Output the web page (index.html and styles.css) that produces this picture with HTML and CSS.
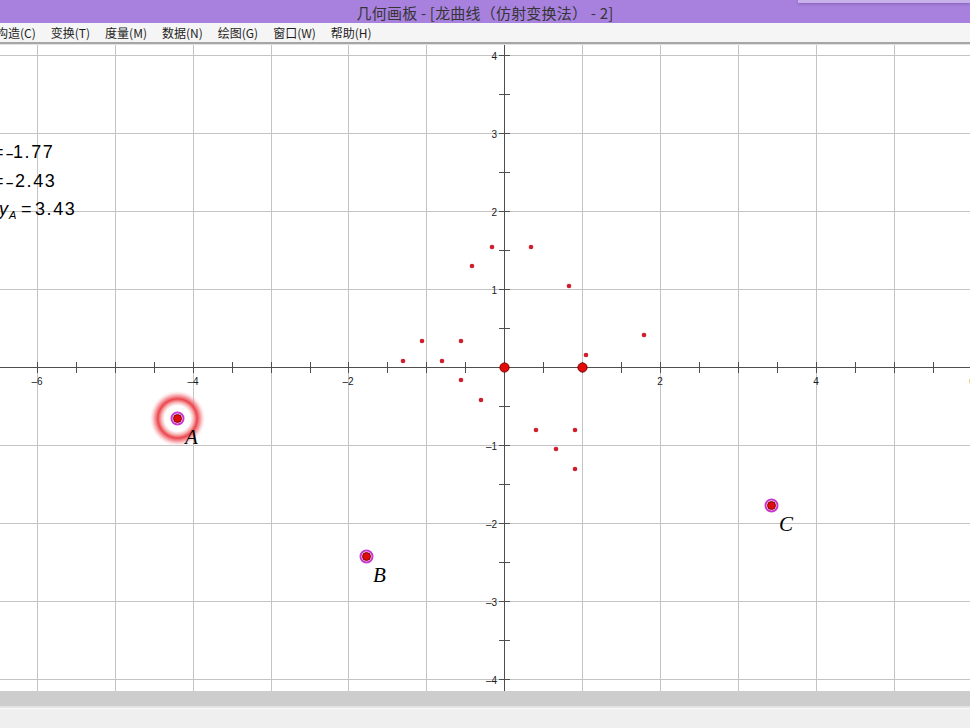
FILE: index.html
```html
<!DOCTYPE html>
<html lang="zh-CN">
<head>
<meta charset="utf-8">
<title>几何画板</title>
<link rel="stylesheet" href="styles.css">
</head>
<body>
<div class="window">
  <div class="titlebar">
    <span class="title">几何画板 - [龙曲线（仿射变换法） - 2]</span>
    <div class="other-window"></div>
  </div>
  <div class="menubar">
    <span class="menu-item">构造(C)</span>
    <span class="menu-item">变换(T)</span>
    <span class="menu-item">度量(M)</span>
    <span class="menu-item">数据(N)</span>
    <span class="menu-item">绘图(G)</span>
    <span class="menu-item">窗口(W)</span>
    <span class="menu-item">帮助(H)</span>
  </div>
  <div class="canvas">
    <svg class="sketch" width="970" height="646" viewBox="0 45 970 646" xmlns="http://www.w3.org/2000/svg">
      <defs>
        <radialGradient id="glow" cx="0.5" cy="0.5" r="0.5">
          <stop offset="0" stop-color="#ffffff" stop-opacity="1"/>
          <stop offset="0.46" stop-color="#ffffff" stop-opacity="1"/>
          <stop offset="0.58" stop-color="#f7b4b4" stop-opacity="1"/>
          <stop offset="0.7" stop-color="#ea3a40" stop-opacity="0.95"/>
          <stop offset="0.82" stop-color="#f0707a" stop-opacity="0.65"/>
          <stop offset="1" stop-color="#ffd8d8" stop-opacity="0"/>
        </radialGradient>
      </defs>
      <path class="grid" d="M37.5 45V691M115.5 45V691M193.5 45V691M271.5 45V691M348.5 45V691M426.5 45V691M582.5 45V691M660.5 45V691M738.5 45V691M816.5 45V691M894.5 45V691M0 55.5H970M0 133.5H970M0 211.5H970M0 289.5H970M0 445.5H970M0 523.5H970M0 601.5H970M0 679.5H970"/>
      <path class="axis" d="M0 367.5H970M504.5 45V691"/>
      <path class="axis" d="M37.5 362V373M76.5 362V373M115.5 362V373M154.5 362V373M193.5 362V373M232.5 362V373M271.5 362V373M310.5 362V373M348.5 362V373M387.5 362V373M426.5 362V373M465.5 362V373M543.5 362V373M582.5 362V373M621.5 362V373M660.5 362V373M699.5 362V373M738.5 362V373M777.5 362V373M816.5 362V373M855.5 362V373M894.5 362V373M933.5 362V373M499 55.5H510M499 94.5H510M499 133.5H510M499 172.5H510M499 211.5H510M499 250.5H510M499 289.5H510M499 328.5H510M499 406.5H510M499 445.5H510M499 484.5H510M499 523.5H510M499 562.5H510M499 601.5H510M499 640.5H510M499 679.5H510"/>

      <g class="xlabels">
        <text x="37" y="385">–6</text>
        <text x="193" y="385">–4</text>
        <text x="348" y="385">–2</text>
        <text x="660" y="385">2</text>
        <text x="816" y="385">4</text>
        <text x="972" y="385">6</text>
      </g>
      <g class="ylabels">
        <text x="497" y="60">4</text>
        <text x="497" y="138">3</text>
        <text x="497" y="216">2</text>
        <text x="497" y="294">1</text>
        <text x="497" y="450">–1</text>
        <text x="497" y="528">–2</text>
        <text x="497" y="606">–3</text>
        <text x="497" y="684">–4</text>
      </g>

      <g class="measure">
        <text x="-7" y="158">=</text><text class="minus" x="6" y="158">–</text><text class="num" x="13" y="158">1.77</text>
        <text x="-7" y="187">=</text><text class="minus" x="6" y="187">–</text><text class="num" x="15" y="187">2.43</text>
        <text class="var" x="-1" y="215">y</text><text class="sub" x="9" y="219">A</text><text x="21" y="215">=</text><text class="num" x="35" y="215">3.43</text>
      </g>

      <g class="dots">
        <circle cx="492" cy="247" r="2.3"/>
        <circle cx="531" cy="247" r="2.3"/>
        <circle cx="472" cy="266" r="2.3"/>
        <circle cx="569" cy="286" r="2.3"/>
        <circle cx="644" cy="335" r="2.3"/>
        <circle cx="422" cy="341" r="2.3"/>
        <circle cx="461" cy="341" r="2.3"/>
        <circle cx="403" cy="361" r="2.3"/>
        <circle cx="442" cy="361" r="2.3"/>
        <circle cx="586" cy="355" r="2.3"/>
        <circle cx="461" cy="380" r="2.3"/>
        <circle cx="481" cy="400" r="2.3"/>
        <circle cx="536" cy="430" r="2.3"/>
        <circle cx="575" cy="430" r="2.3"/>
        <circle cx="556" cy="449" r="2.3"/>
        <circle cx="575" cy="469" r="2.3"/>
      </g>
      <g class="big">
        <circle cx="504.5" cy="367.5" r="4.6"/>
        <circle cx="582.5" cy="367.5" r="4.6"/>
      </g>

      <circle cx="177.5" cy="418.5" r="28" fill="url(#glow)"/>
      <g class="point">
        <circle class="ring" cx="177.5" cy="418.5" r="6"/>
        <circle class="core" cx="177.5" cy="418.5" r="4"/>
        <circle class="ring" cx="366.5" cy="556.5" r="6"/>
        <circle class="core" cx="366.5" cy="556.5" r="4"/>
        <circle class="ring" cx="771.5" cy="505.5" r="6"/>
        <circle class="core" cx="771.5" cy="505.5" r="4"/>
      </g>
      <g class="names">
        <text x="185" y="444">A</text>
        <text x="373" y="582">B</text>
        <text x="779" y="531">C</text>
      </g>
    </svg>
  </div>
  <div class="hscroll"></div>
  <div class="status"></div>
</div>
</body>
</html>
```

FILE: styles.css
```css
* { box-sizing: border-box; }
html, body { margin: 0; padding: 0; background: #f0f0f0; }
body { width: 970px; height: 728px; overflow: hidden; }

.window {
  width: 970px;
  height: 728px;
  display: flex;
  flex-direction: column;
}

.titlebar {
  position: relative;
  height: 23px;
  flex: none;
  background: #a881de;
  display: flex;
  justify-content: center;
  align-items: center;
  padding-top: 2px;
}
.title {
  font-family: "Noto Sans CJK SC", "Liberation Sans", sans-serif;
  font-size: 15px;
  color: #353535;
  letter-spacing: 0.2px;
  white-space: nowrap;
}
.other-window {
  position: absolute;
  right: 0;
  top: 0;
  width: 172px;
  height: 3px;
  background: #c7b1ea;
  box-shadow: 0 1px 3px rgba(60, 30, 100, 0.35);
}

.menubar {
  height: 21px;
  flex: none;
  background: #f5f5f5;
  border-bottom: 2px solid #a6a6a6;
  display: flex;
  align-items: center;
  gap: 15px;
  margin-left: -4px;
  padding-bottom: 1px;
}
.menu-item {
  font-family: "Noto Sans CJK SC", "Liberation Sans", sans-serif;
  font-size: 12px;
  color: #1e1e1e;
  white-space: nowrap;
}

.canvas {
  height: 647px;
  flex: none;
  background: #ffffff;
  border-top: 1px solid #e2e2e2;
  overflow: hidden;
}
.sketch { display: block; }

.grid { stroke: #c4c4c4; stroke-width: 1; fill: none; }
.axis { stroke: #4e4e4e; stroke-width: 1; fill: none; }

.xlabels text {
  font-family: "Liberation Sans", Arial, sans-serif;
  font-size: 10px;
  fill: #1a1a1a;
  text-anchor: middle;
}
.ylabels text {
  font-family: "Liberation Sans", Arial, sans-serif;
  font-size: 10px;
  fill: #1a1a1a;
  text-anchor: end;
}

.measure text {
  font-family: "Liberation Sans", Arial, sans-serif;
  font-size: 18px;
  fill: #000;
}
.measure .minus { font-size: 13px; font-weight: bold; }
.measure .num { letter-spacing: 1.6px; }
.measure .var { font-style: italic; }
.measure .sub { font-style: italic; font-size: 11px; }

.dots circle { fill: #cf1f2c; }
.big circle { fill: #e30a0a; stroke: #7a0000; stroke-width: 1; }

.point .ring { fill: #ffffff; stroke: #cc35cf; stroke-width: 2; }
.point .core { fill: #e00c0c; stroke: #6e0000; stroke-width: 0.9; }

.names text {
  font-family: "Liberation Serif", "Times New Roman", serif;
  font-style: italic;
  font-size: 21px;
  fill: #000;
}

.hscroll {
  height: 15px;
  flex: none;
  background: #cdcdcd;
}
.status {
  flex: 1;
  background: #efefef;
  border-top: 2px solid #e3e3e3;
  box-shadow: inset 0 1px 0 #fbfbfb;
}
```
